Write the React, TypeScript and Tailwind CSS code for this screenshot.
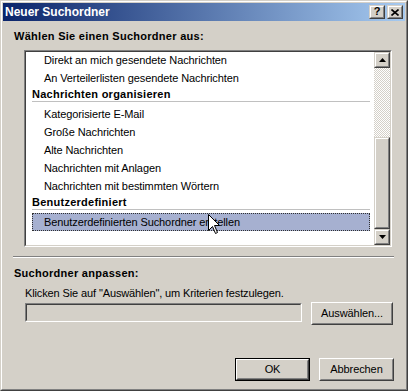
import React from "react";

const font = "font-['Liberation_Sans','Arial',sans-serif]";

function Raised({ className = "", children }: { className?: string; children?: React.ReactNode }) {
  return (
    <div className={`border border-t-[#d4d0c8] border-l-[#d4d0c8] border-b-[#404040] border-r-[#404040] ${className}`}>
      <div className="w-full h-full border border-t-white border-l-white border-b-[#808080] border-r-[#808080] bg-[#d4d0c8] flex items-center justify-center">
        {children}
      </div>
    </div>
  );
}

function PushButton({ className = "", children, isDefault = false }: { className?: string; children?: React.ReactNode; isDefault?: boolean }) {
  const inner = (
    <div className="w-full h-full border border-t-white border-l-white border-b-[#404040] border-r-[#404040]">
      <div className="w-full h-full border border-t-[#d4d0c8] border-l-[#d4d0c8] border-b-[#808080] border-r-[#808080] bg-[#d4d0c8] flex items-center justify-center text-[11px] text-black tracking-[-0.1px]">
        {children}
      </div>
    </div>
  );
  if (isDefault) {
    return <div className={`border border-black ${className}`}>{inner}</div>;
  }
  return <div className={className}>{inner}</div>;
}

function Item({ children }: { children: React.ReactNode }) {
  return <div className="h-[18px] leading-[18px] pl-[18px] text-[11px] tracking-[-0.1px] text-black whitespace-nowrap">{children}</div>;
}

function Header({ children }: { children: React.ReactNode }) {
  return (
    <div className="ml-[6px] w-[338px] h-[15px] mb-[3px] border-b border-[#c0c0c0] text-[11px] font-bold tracking-[0.25px] leading-[14px] text-black whitespace-nowrap">
      {children}
    </div>
  );
}

function Arrow({ up }: { up: boolean }) {
  return (
    <svg width="7" height="4" viewBox="0 0 7 4">
      {up ? <polygon points="3.5,0 7,4 0,4" fill="#000" /> : <polygon points="0,0 7,0 3.5,4" fill="#000" />}
    </svg>
  );
}

export default function App() {
  return (
    <div className={`${font} w-[408px] h-[391px] border border-t-[#d4d0c8] border-l-[#d4d0c8] border-b-[#404040] border-r-[#404040] relative overflow-hidden`}>
      <div className="w-full h-full border border-t-white border-l-white border-b-[#808080] border-r-[#808080] bg-[#d4d0c8] p-px flex flex-col">
        {/* Title bar */}
        <div className="h-[18px] bg-[linear-gradient(to_right,#0a246a,#a6caf0)] flex items-center pl-[2px] pr-[2px] shrink-0">
          <div className="text-white font-bold text-[12px] leading-[18px] flex-1">Neuer Suchordner</div>
          <Raised className="w-[16px] h-[14px]">
            <span className="text-[11px] font-bold leading-none text-black -mt-px">?</span>
          </Raised>
          <Raised className="w-[16px] h-[14px] ml-[2px]">
            <svg width="8" height="7" viewBox="0 0 8 7">
              <path d="M0.5 0.5 L7.5 6.5 M7.5 0.5 L0.5 6.5" stroke="#000" strokeWidth="1.6" />
            </svg>
          </Raised>
        </div>

        {/* Label 1 */}
        <div className="mt-[9px] ml-[11px] h-[13px] leading-[13px] text-[11px] font-bold tracking-[0.28px] text-black">
          Wählen Sie einen Suchordner aus:
        </div>

        {/* List box */}
        <div className="mt-[7px] ml-[21px] w-[368px] h-[197px] border border-t-[#808080] border-l-[#808080] border-b-white border-r-white">
          <div className="w-full h-full border border-t-[#404040] border-l-[#404040] border-b-[#d4d0c8] border-r-[#d4d0c8] bg-white flex">
            <div className="flex-1 overflow-hidden">
              <div className="-mt-px">
                <Item>Direkt an mich gesendete Nachrichten</Item>
                <Item>An Verteilerlisten gesendete Nachrichten</Item>
                <Header>Nachrichten organisieren</Header>
                <Item>Kategorisierte E-Mail</Item>
                <Item>Große Nachrichten</Item>
                <Item>Alte Nachrichten</Item>
                <Item>Nachrichten mit Anlagen</Item>
                <Item>Nachrichten mit bestimmten Wörtern</Item>
                <Header>Benutzerdefiniert</Header>
                <div className="ml-[6px] w-[338px] h-[18px] bg-[#a6b0d0] border border-dotted border-[#303030] pl-[11px] text-[11px] tracking-[-0.1px] leading-[16px] text-black whitespace-nowrap">
                  Benutzerdefinierten Suchordner erstellen
                </div>
              </div>
            </div>
            {/* Scrollbar */}
            <div className="w-[16px] flex flex-col shrink-0">
              <Raised className="w-[16px] h-[16px] shrink-0">
                <Arrow up />
              </Raised>
              <div className="h-[69px] shrink-0 bg-[repeating-conic-gradient(#ffffff_0%_25%,#d4d0c8_0%_50%)] bg-[length:2px_2px]" />
              <Raised className="w-[16px] flex-1" />
              <Raised className="w-[16px] h-[16px] shrink-0">
                <Arrow up={false} />
              </Raised>
            </div>
          </div>
        </div>

        {/* Groove */}
        <div className="mt-[9px] ml-[10px] w-[381px] h-[2px] border-t border-t-[#808080] border-b border-b-white" />

        {/* Label 2 */}
        <div className="mt-[9px] ml-[11px] h-[13px] leading-[13px] text-[11px] font-bold tracking-[0.28px] text-black">
          Suchordner anpassen:
        </div>
        <div className="mt-[7px] ml-[22px] h-[13px] leading-[13px] text-[11px] tracking-[-0.12px] text-black">
          Klicken Sie auf "Auswählen", um Kriterien festzulegen.
        </div>

        <div className="mt-[2px] flex items-start">
          <div className="mt-px ml-[22px] w-[277px] h-[19px] border border-t-[#808080] border-l-[#808080] border-b-white border-r-white">
            <div className="w-full h-full border border-t-[#404040] border-l-[#404040] border-b-[#d4d0c8] border-r-[#d4d0c8] bg-[#d4d0c8]" />
          </div>
          <PushButton className="ml-[9px] w-[82px] h-[23px]">Auswählen...</PushButton>
        </div>

        <div className="mt-[33px] flex">
          <PushButton isDefault className="ml-[232px] w-[75px] h-[23px]">OK</PushButton>
          <PushButton className="ml-[9px] w-[75px] h-[23px]">Abbrechen</PushButton>
        </div>
      </div>

      {/* Mouse cursor */}
      <svg className="absolute left-[207px] top-[213px]" width="13" height="21" viewBox="0 0 13 21">
        <polygon points="0.5,0.5 0.5,16.5 4.5,12.5 7.5,19.5 9.5,18.5 6.5,11.5 11.5,11.5" fill="#fff" stroke="#000" strokeWidth="1" />
      </svg>
    </div>
  );
}
